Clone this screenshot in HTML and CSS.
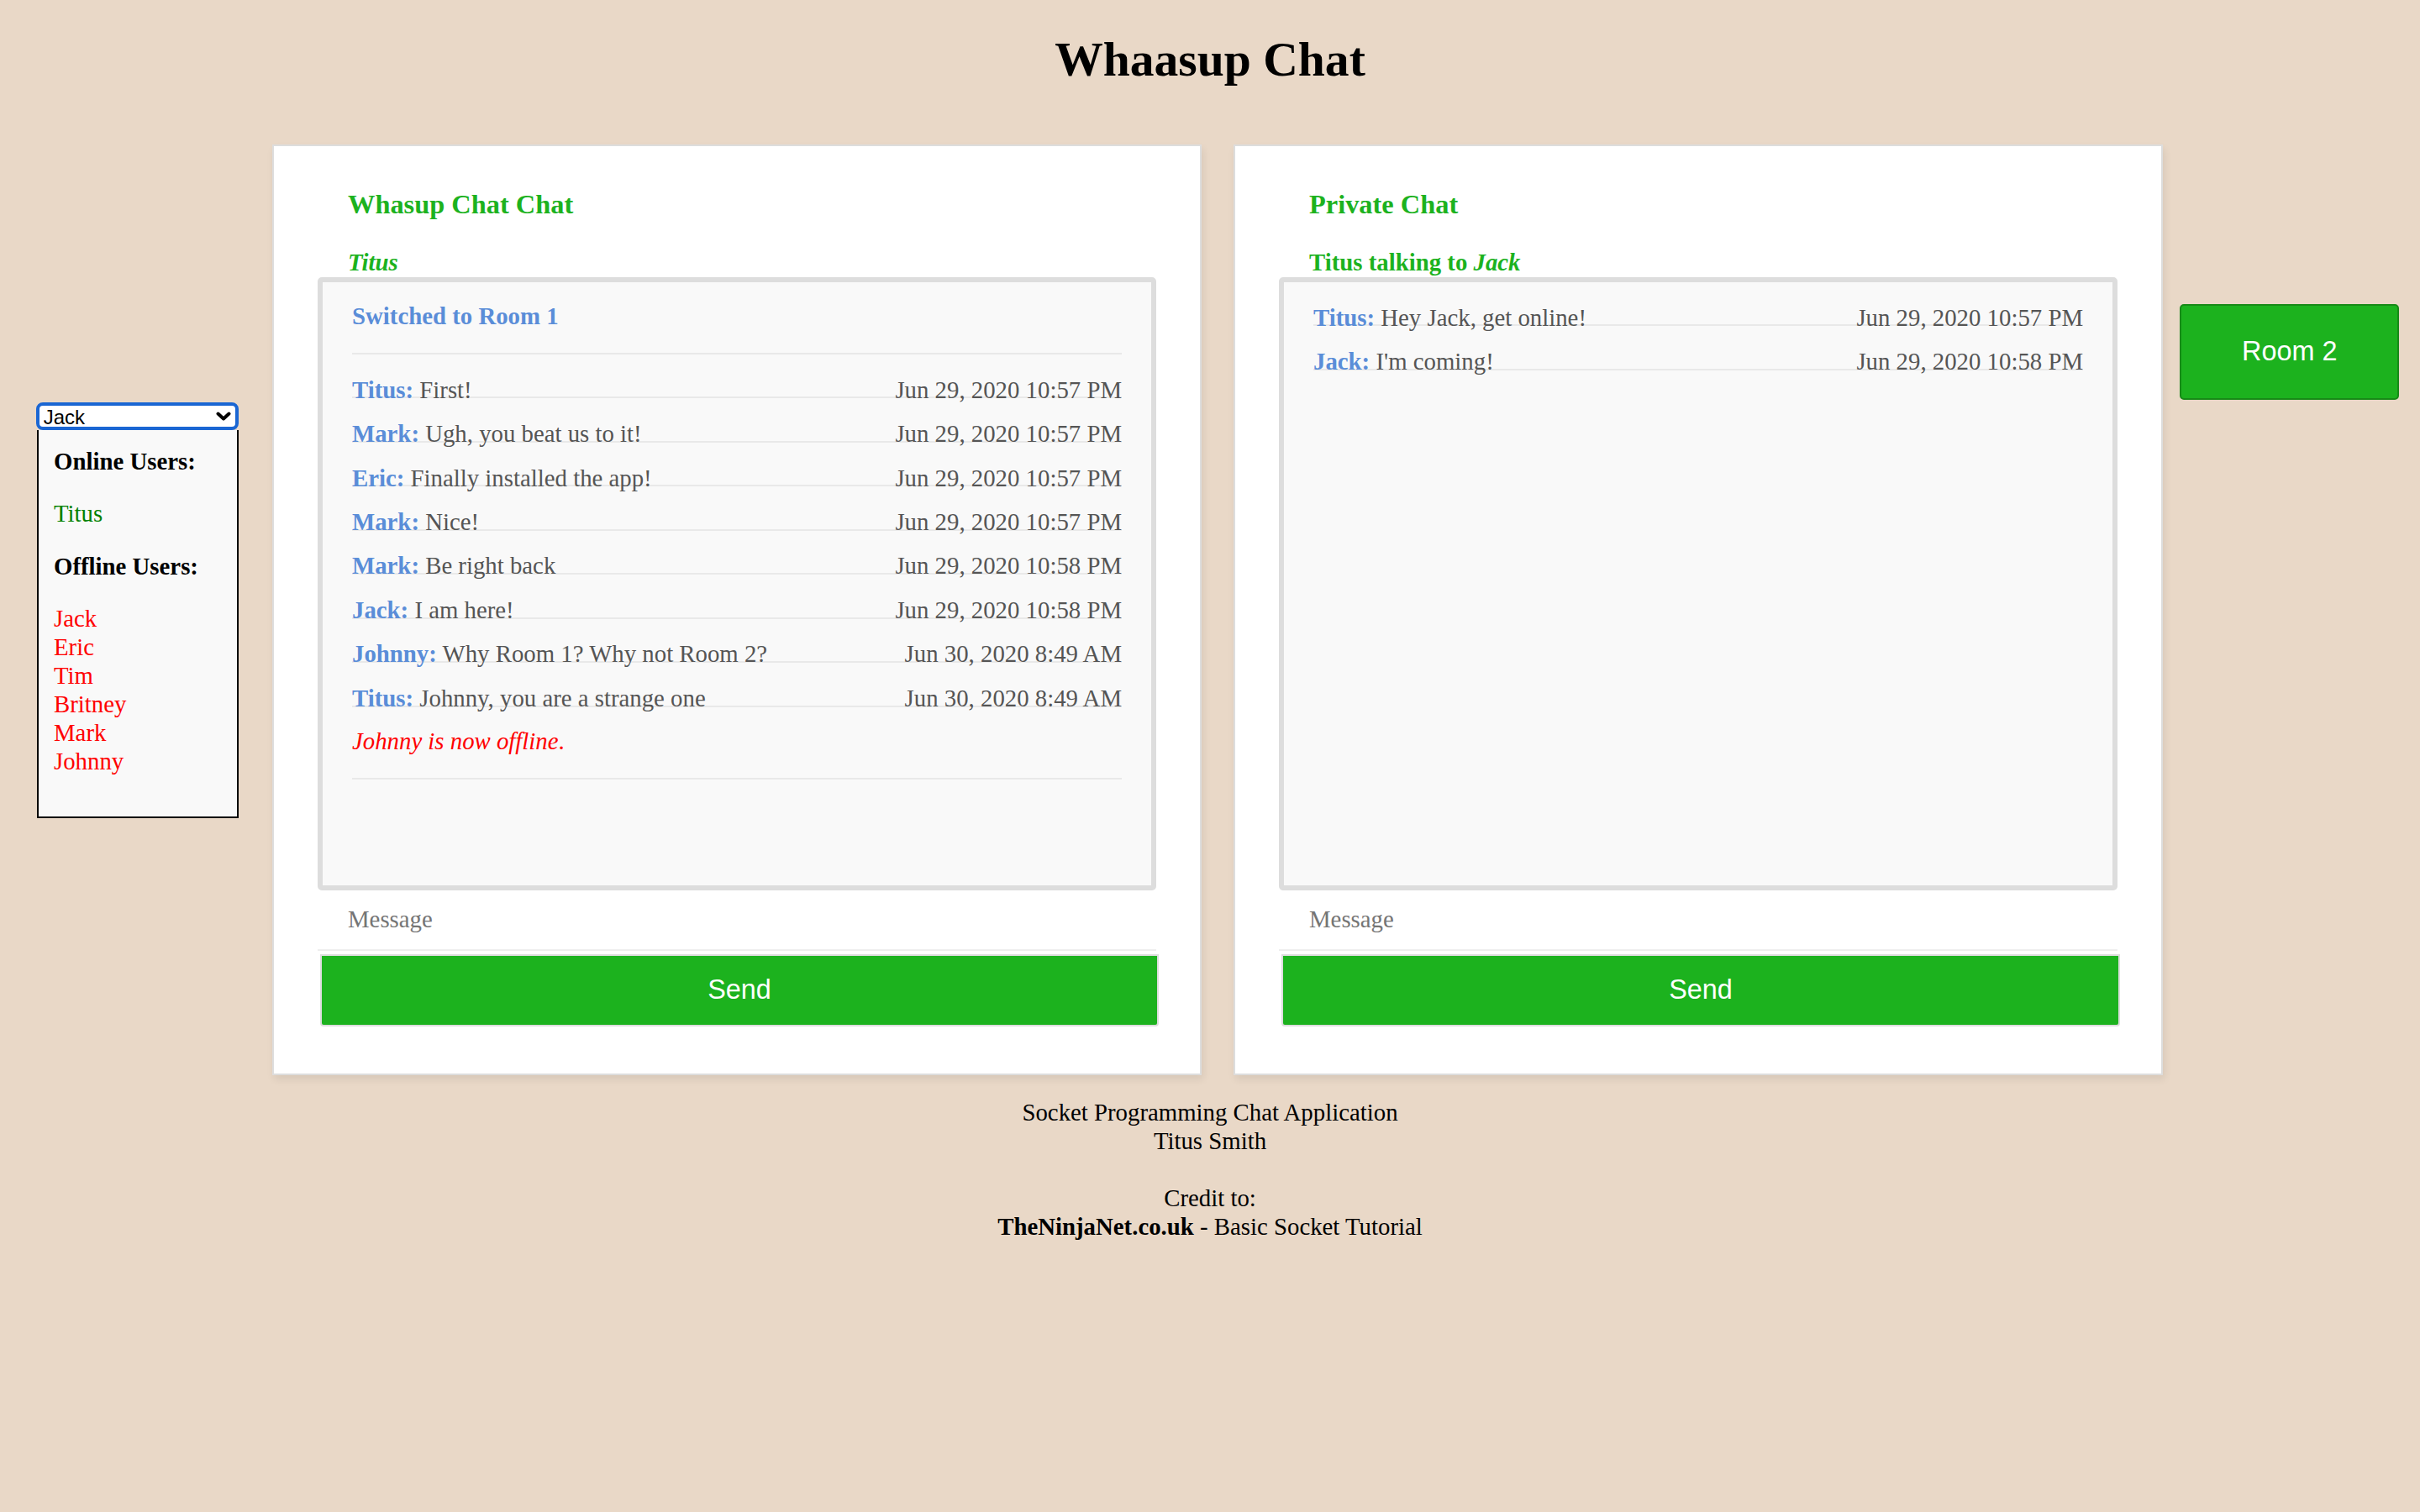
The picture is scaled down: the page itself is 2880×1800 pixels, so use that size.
FILE: index.html
```html
<!DOCTYPE html>
<html lang="en">
<head>
<meta charset="utf-8">
<title>Whaasup Chat</title>
<link rel="stylesheet" href="styles.css">
</head>
<body>
<h1 class="page-title">Whaasup Chat</h1>

<div class="layout">
  <aside class="sidebar">
    <div class="select-wrap">
      <select class="user-select">
        <option>Jack</option>
        <option>Eric</option>
        <option>Tim</option>
        <option>Britney</option>
        <option>Mark</option>
        <option>Johnny</option>
      </select>
      <svg class="chevron" viewBox="0 0 18 11" aria-hidden="true"><path d="M2.5 2.5 L9 8.5 L15.5 2.5" fill="none" stroke="#000" stroke-width="4" stroke-linecap="round" stroke-linejoin="round"/></svg>
    </div>
    <div class="user-box">
      <p class="user-heading">Online Users:</p>
      <ul class="user-list user-list--online">
        <li>Titus</li>
      </ul>
      <p class="user-heading">Offline Users:</p>
      <ul class="user-list user-list--offline">
        <li>Jack</li>
        <li>Eric</li>
        <li>Tim</li>
        <li>Britney</li>
        <li>Mark</li>
        <li>Johnny</li>
      </ul>
    </div>
  </aside>

  <div class="cards">
    <section class="card">
      <h2 class="card-title">Whasup Chat Chat</h2>
      <p class="card-user"><em>Titus</em></p>
      <div class="chat-window">
        <p class="notice notice--room">Switched to Room 1</p>
        <div class="msg"><div class="msg-line"><span><span class="msg-name">Titus:</span> First!</span><span>Jun 29, 2020 10:57 PM</span></div></div>
        <div class="msg"><div class="msg-line"><span><span class="msg-name">Mark:</span> Ugh, you beat us to it!</span><span>Jun 29, 2020 10:57 PM</span></div></div>
        <div class="msg"><div class="msg-line"><span><span class="msg-name">Eric:</span> Finally installed the app!</span><span>Jun 29, 2020 10:57 PM</span></div></div>
        <div class="msg"><div class="msg-line"><span><span class="msg-name">Mark:</span> Nice!</span><span>Jun 29, 2020 10:57 PM</span></div></div>
        <div class="msg"><div class="msg-line"><span><span class="msg-name">Mark:</span> Be right back</span><span>Jun 29, 2020 10:58 PM</span></div></div>
        <div class="msg"><div class="msg-line"><span><span class="msg-name">Jack:</span> I am here!</span><span>Jun 29, 2020 10:58 PM</span></div></div>
        <div class="msg"><div class="msg-line"><span><span class="msg-name">Johnny:</span> Why Room 1? Why not Room 2?</span><span>Jun 30, 2020 8:49 AM</span></div></div>
        <div class="msg"><div class="msg-line"><span><span class="msg-name">Titus:</span> Johnny, you are a strange one</span><span>Jun 30, 2020 8:49 AM</span></div></div>
        <p class="notice notice--offline"><em>Johnny is now offline</em>.</p>
      </div>
      <input class="msg-input" type="text" placeholder="Message">
      <button class="send-btn" type="button">Send</button>
    </section>

    <section class="card">
      <h2 class="card-title">Private Chat</h2>
      <p class="card-user">Titus talking to <em>Jack</em></p>
      <div class="chat-window">
        <div class="msg"><div class="msg-line"><span><span class="msg-name">Titus:</span> Hey Jack, get online!</span><span>Jun 29, 2020 10:57 PM</span></div></div>
        <div class="msg"><div class="msg-line"><span><span class="msg-name">Jack:</span> I'm coming!</span><span>Jun 29, 2020 10:58 PM</span></div></div>
      </div>
      <input class="msg-input" type="text" placeholder="Message">
      <button class="send-btn" type="button">Send</button>
    </section>
  </div>

  <button class="room-btn" type="button">Room 2</button>
</div>

<p class="credits">Socket Programming Chat Application<br>Titus Smith<br><br>Credit to:<br><b>TheNinjaNet.co.uk</b> - Basic Socket Tutorial</p>
</body>
</html>
```

FILE: styles.css
```css
body {
  margin: 0;
  background: #e9d8c7;
  font-family: "Liberation Serif", "Times New Roman", serif;
  font-size: 28.8px;
  line-height: 34px;
  color: #000;
}

.page-title {
  margin: 36.6px 0 0;
  text-align: center;
  font-size: 57.6px;
  line-height: 68px;
  font-weight: bold;
}

.layout {
  display: flex;
  align-items: flex-start;
  padding-left: 43px;
}

/* ---------- sidebar ---------- */
.sidebar {
  flex: none;
  width: 241px;
  margin-top: 374.4px;
}

.select-wrap {
  position: relative;
  height: 33px;
}

.user-select {
  -webkit-appearance: none;
  appearance: none;
  display: block;
  box-sizing: border-box;
  width: 241px;
  height: 33px;
  margin: 0;
  padding: 0 0 0 4.7px;
  border: 4px solid #1a66d3;
  border-radius: 8px;
  background: #fff;
  color: #000;
  font-family: "Liberation Sans", Arial, sans-serif;
  font-size: 24px;
  outline: none;
}

.chevron {
  position: absolute;
  left: 213.7px;
  top: 11.3px;
  width: 18px;
  height: 11px;
  pointer-events: none;
}

.user-box {
  box-sizing: border-box;
  width: 240px;
  margin-left: 1px;
  padding: 19.7px 18px 20.4px;
  border: 2px solid #000;
  border-top: 0;
  background: #f9f9f9;
}

.user-heading {
  margin: 0 0 28.5px;
  font-weight: bold;
}

.user-list {
  list-style: none;
  margin: 0 0 28.5px;
  padding: 0;
}

.user-list--online {
  color: #008000;
}

.user-list--offline {
  color: #ff0000;
}

/* ---------- chat cards ---------- */
.cards {
  display: flex;
  gap: 38px;
  margin-left: 40px;
  margin-top: 67.1px;
}

.card {
  box-sizing: border-box;
  flex: none;
  width: 1106px;
  padding: 32.6px 52px 56px;
  background: #fff;
  border: 2px solid #ddd;
  box-shadow: 2px 5px 9px rgba(0, 0, 0, 0.08);
}

.card-title {
  margin: 0;
  padding: 18px 36px;
  font-size: 32.4px;
  line-height: 38.2px;
  font-weight: bold;
  color: #1cb21e;
}

.card-user {
  margin: 14.5px 0 1px;
  padding: 0 36px;
  font-weight: bold;
  color: #1cb21e;
}

.chat-window {
  height: 718px;
  overflow: auto;
  background: #f9f9f9;
  border: 6px solid #ddd;
  border-radius: 5px;
}

.notice {
  margin: 0 35px;
  padding: 23.3px 0 26.7px;
  border-bottom: 2px solid #e9e9e9;
}

.notice--room {
  color: #5a8dd8;
  font-weight: bold;
}

.notice--offline {
  padding: 23.1px 0 27px;
  color: #ff0000;
}

.msg {
  margin: 0 35px;
  padding-top: 24.6px;
  height: 25.88px;
  border-bottom: 2px solid #e9e9e9;
}

.msg-line {
  display: flex;
  justify-content: space-between;
  white-space: nowrap;
  color: #555;
}

.msg-name {
  color: #5a8dd8;
  font-weight: bold;
}

.msg-input {
  display: block;
  box-sizing: border-box;
  width: 100%;
  height: 72px;
  margin: 0;
  padding: 0 36px;
  border: 0;
  border-bottom: 2px solid #eee;
  background: #fff;
  color: #000;
  font-family: inherit;
  font-size: 28.8px;
  outline: none;
}

.msg-input::placeholder {
  color: #757575;
}

.send-btn {
  display: block;
  box-sizing: border-box;
  width: 100%;
  height: 85.7px;
  margin: 4px 0 0 3px;
  padding: 0;
  border: 2px solid #ddd;
  border-radius: 0 0 4px 4px;
  background: #1cb21e;
  color: #fff;
  font-family: "Liberation Sans", Arial, sans-serif;
  font-size: 32.4px;
}

/* ---------- room switch ---------- */
.room-btn {
  flex: none;
  box-sizing: border-box;
  width: 261.4px;
  height: 113.4px;
  margin: 257.7px 0 0 20px;
  padding: 0;
  border: 2px solid #178a17;
  border-radius: 5px;
  background: #1cb21e;
  color: #fff;
  font-family: "Liberation Sans", Arial, sans-serif;
  font-size: 32.4px;
}

/* ---------- footer ---------- */
.credits {
  margin: 26.9px 0 0;
  text-align: center;
}
```
